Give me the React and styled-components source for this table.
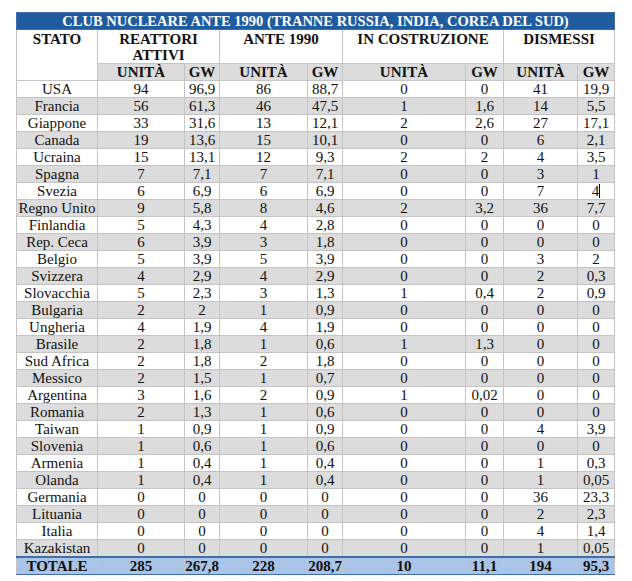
import styled, { createGlobalStyle } from "styled-components";

const GlobalStyle = createGlobalStyle`
    body {
        margin: 0;
        background: #ffffff;
        font-family: "Liberation Serif", "Times New Roman", serif;
    }
`

const righe = [
    ["USA", "94", "96,9", "86", "88,7", "0", "0", "41", "19,9"],
    ["Francia", "56", "61,3", "46", "47,5", "1", "1,6", "14", "5,5"],
    ["Giappone", "33", "31,6", "13", "12,1", "2", "2,6", "27", "17,1"],
    ["Canada", "19", "13,6", "15", "10,1", "0", "0", "6", "2,1"],
    ["Ucraina", "15", "13,1", "12", "9,3", "2", "2", "4", "3,5"],
    ["Spagna", "7", "7,1", "7", "7,1", "0", "0", "3", "1"],
    ["Svezia", "6", "6,9", "6", "6,9", "0", "0", "7", "4"],
    ["Regno Unito", "9", "5,8", "8", "4,6", "2", "3,2", "36", "7,7"],
    ["Finlandia", "5", "4,3", "4", "2,8", "0", "0", "0", "0"],
    ["Rep. Ceca", "6", "3,9", "3", "1,8", "0", "0", "0", "0"],
    ["Belgio", "5", "3,9", "5", "3,9", "0", "0", "3", "2"],
    ["Svizzera", "4", "2,9", "4", "2,9", "0", "0", "2", "0,3"],
    ["Slovacchia", "5", "2,3", "3", "1,3", "1", "0,4", "2", "0,9"],
    ["Bulgaria", "2", "2", "1", "0,9", "0", "0", "0", "0"],
    ["Ungheria", "4", "1,9", "4", "1,9", "0", "0", "0", "0"],
    ["Brasile", "2", "1,8", "1", "0,6", "1", "1,3", "0", "0"],
    ["Sud Africa", "2", "1,8", "2", "1,8", "0", "0", "0", "0"],
    ["Messico", "2", "1,5", "1", "0,7", "0", "0", "0", "0"],
    ["Argentina", "3", "1,6", "2", "0,9", "1", "0,02", "0", "0"],
    ["Romania", "2", "1,3", "1", "0,6", "0", "0", "0", "0"],
    ["Taiwan", "1", "0,9", "1", "0,9", "0", "0", "4", "3,9"],
    ["Slovenia", "1", "0,6", "1", "0,6", "0", "0", "0", "0"],
    ["Armenia", "1", "0,4", "1", "0,4", "0", "0", "1", "0,3"],
    ["Olanda", "1", "0,4", "1", "0,4", "0", "0", "1", "0,05"],
    ["Germania", "0", "0", "0", "0", "0", "0", "36", "23,3"],
    ["Lituania", "0", "0", "0", "0", "0", "0", "2", "2,3"],
    ["Italia", "0", "0", "0", "0", "0", "0", "4", "1,4"],
    ["Kazakistan", "0", "0", "0", "0", "0", "0", "1", "0,05"],
]

const totale = ["TOTALE", "285", "267,8", "228", "208,7", "10", "11,1", "194", "95,3"]

const larghezze = [81, 87, 35, 88, 35, 123, 38, 74, 37]

export default function App() {
    return (
        <Pagina>
            <GlobalStyle />
            <Tabella>
                <colgroup>
                    {larghezze.map((w, i) => <col key={i} style={{ width: w }} />)}
                </colgroup>
                <thead>
                    <tr>
                        <Titolo colSpan={9}>CLUB NUCLEARE ANTE 1990 (TRANNE RUSSIA, INDIA, COREA DEL SUD)</Titolo>
                    </tr>
                    <tr>
                        <Intestazione rowSpan={2}>STATO</Intestazione>
                        <Intestazione colSpan={2}>REATTORI<br />ATTIVI</Intestazione>
                        <Intestazione colSpan={2}>ANTE 1990</Intestazione>
                        <Intestazione colSpan={2}>IN COSTRUZIONE</Intestazione>
                        <Intestazione colSpan={2}>DISMESSI</Intestazione>
                    </tr>
                    <RigaSotto>
                        {["UNITÀ", "GW", "UNITÀ", "GW", "UNITÀ", "GW", "UNITÀ", "GW"].map((t, i) => (
                            <SottoIntestazione key={i}>{t}</SottoIntestazione>
                        ))}
                    </RigaSotto>
                </thead>
                <tbody>
                    {righe.map((r, i) => (
                        <Riga key={r[0]} $grigia={i % 2 === 1}>
                            {r.map((v, j) => (
                                <Cella key={j}>
                                    {v}
                                    {r[0] === "Svezia" && j === 8 && <Cursore />}
                                </Cella>
                            ))}
                        </Riga>
                    ))}
                    <RigaTotale>
                        {totale.map((v, j) => <CellaTotale key={j}>{v}</CellaTotale>)}
                    </RigaTotale>
                </tbody>
            </Tabella>
        </Pagina>
    )
}

const Pagina = styled.div`
    padding: 12px 0 0 16px;
`
const Tabella = styled.table`
    border-collapse: collapse;
    table-layout: fixed;
    width: 599px;
    border: 1px solid #3f6fa6;
    font-family: "Liberation Serif", "Times New Roman", serif;
    font-size: 15px;
    line-height: 16px;
    color: #111111;

    th, td {
        font-family: "Liberation Serif", "Times New Roman", serif;
    }
`
const Titolo = styled.th`
    background-color: #1f5c9f;
    color: #ffffff;
    font-size: 14.5px;
    font-weight: bold;
    height: 16px;
    padding: 0;
    border: 1px solid #3f6fa6;
    text-align: center;
    white-space: nowrap;
`
const Intestazione = styled.th`
    background-color: #ffffff;
    font-size: 15px;
    font-weight: bold;
    height: 32px;
    padding: 1px 0 0;
    vertical-align: top;
    text-align: center;
    border: 1px solid #c4c4c4;
    line-height: 16px;
`
const RigaSotto = styled.tr`
    background-color: #dcdcdc;
`
const SottoIntestazione = styled.th`
    font-size: 15px;
    font-weight: bold;
    height: 16px;
    padding: 0;
    text-align: center;
    border: 1px solid #c4c4c4;
`
const Riga = styled.tr`
    background-color: ${props => props.$grigia ? "#dcdcdc" : "#ffffff"};
`
const Cella = styled.td`
    height: 16px;
    padding: 0;
    text-align: center;
    border: 1px solid #c4c4c4;
    white-space: nowrap;
`
const Cursore = styled.span`
    display: inline-block;
    width: 1px;
    height: 14px;
    background: #000000;
    vertical-align: -2px;
`
const RigaTotale = styled.tr`
    background-color: #a9c4e6;
`
const CellaTotale = styled.td`
    height: 16px;
    padding: 0;
    text-align: center;
    font-weight: bold;
    border: 1px solid #c4c4c4;
    border-top: 2px solid #3f6fa6;
    border-bottom: 1px solid #3f6fa6;
`
